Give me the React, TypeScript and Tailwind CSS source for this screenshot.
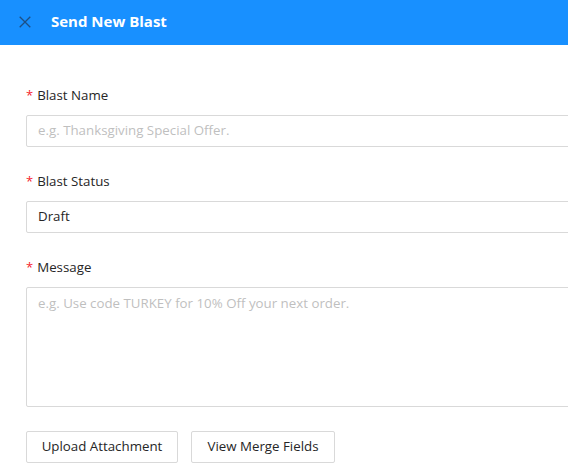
import React from "react";

export default function App() {
  return (
    <div className="w-[568px] h-[468px] overflow-hidden bg-white" style={{ fontFamily: '"Open Sans", "Noto Sans", sans-serif' }}>
      <div className="h-[45px] bg-[#1890ff] flex items-center">
        <svg className="ml-[19px] -mt-[2px]" width="12" height="12" viewBox="0 0 12 12" fill="none">
          <path d="M0.7 0.7 L11.3 11.3 M11.3 0.7 L0.7 11.3" stroke="#1d4f85" strokeWidth="1.3" />
        </svg>
        <span className="ml-[20px] -mt-[3px] text-white font-bold text-[15px]">Send New Blast</span>
      </div>
      <div className="pl-[26px] pt-[41px] w-[640px]">
        <div className="flex flex-col">
          <label className="h-[20px] flex items-center text-[13.3px] text-[#262626]">
            <span className="text-[#f5222d] mr-[4px] text-[13px]">*</span>Blast Name
          </label>
          <div className="mt-[9px] h-[32px] border border-[#d9d9d9] rounded-[2px] flex items-center px-[11px] text-[13.3px] text-[#bfbfbf]">
            e.g. Thanksgiving Special Offer.
          </div>
        </div>
        <div className="flex flex-col mt-[25px]">
          <label className="h-[20px] flex items-center text-[13.3px] text-[#262626]">
            <span className="text-[#f5222d] mr-[4px] text-[13px]">*</span>Blast Status
          </label>
          <div className="mt-[9px] h-[32px] border border-[#d9d9d9] rounded-[2px] flex items-center px-[11px] text-[13.3px] text-[#262626]">
            Draft
          </div>
        </div>
        <div className="flex flex-col mt-[25px]">
          <label className="h-[20px] flex items-center text-[13.3px] text-[#262626]">
            <span className="text-[#f5222d] mr-[4px] text-[13px]">*</span>Message
          </label>
          <div className="mt-[9px] h-[120px] border border-[#d9d9d9] rounded-[2px] px-[11px] pt-[4px] text-[13.3px] leading-[22px] text-[#bfbfbf]">
            e.g. Use code TURKEY for 10% Off your next order.
          </div>
        </div>
        <div className="flex gap-[13px] mt-[24px]">
          <button className="h-[32px] w-[152px] border border-[#d9d9d9] rounded-[2px] text-[13.3px] text-[#262626] bg-white">
            Upload Attachment
          </button>
          <button className="h-[32px] w-[144px] border border-[#d9d9d9] rounded-[2px] text-[13.3px] text-[#262626] bg-white">
            View Merge Fields
          </button>
        </div>
      </div>
    </div>
  );
}
